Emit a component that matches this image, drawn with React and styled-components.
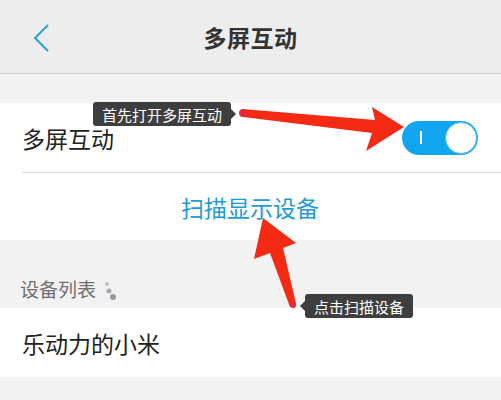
import React from 'react';
import styled, { createGlobalStyle } from 'styled-components';

const GlobalStyle = createGlobalStyle`
  body {
    margin: 0;
    background: #f2f2f2;
    font-family: "Noto Sans CJK SC", "Noto Sans", sans-serif;
  }
`;

const Page = styled.div`
  position: relative;
  width: 501px;
  height: 400px;
  overflow: hidden;
  background: #f2f2f2;
`;

const Header = styled.div`
  height: 73px;
  display: grid;
  grid-template-columns: 1fr auto 1fr;
  align-items: center;
  background: #ededed;
  border-bottom: 1px solid #c9c9c9;
`;

const Back = styled.div`
  padding-left: 32px;
  padding-top: 2px;
  display: flex;
`;

const Title = styled.div`
  font-size: 23px;
  font-weight: 700;
  color: #333;
  letter-spacing: 0.5px;
`;

const Gap = styled.div`
  height: ${p => p.h}px;
`;

const Section = styled.div`
  background: #fff;
`;

const Row = styled.div`
  height: ${p => p.h}px;
  display: flex;
  align-items: center;
  justify-content: ${p => (p.center ? 'center' : 'space-between')};
  padding: 0 23px 0 22px;
  font-size: 23px;
  color: ${p => (p.blue ? '#1f9bd6' : '#222')};
`;

const Divider = styled.div`
  height: 1px;
  margin-left: 22px;
  background: #dcdcdc;
`;

const Toggle = styled.div`
  width: 76px;
  height: 34px;
  border-radius: 17px;
  background: #11a4ef;
  display: flex;
  align-items: center;
  justify-content: space-between;
  padding: 0 1px 0 18px;
  box-sizing: border-box;
`;

const Mark = styled.div`
  width: 2px;
  height: 13px;
  background: #fff;
`;

const Knob = styled.div`
  width: 30px;
  height: 30px;
  border-radius: 50%;
  background: #fff;
  border: 1px solid #5bbde8;
`;

const ListLabel = styled.div`
  height: 68px;
  display: flex;
  align-items: flex-end;
  padding: 0 0 6px 20px;
  box-sizing: border-box;
  font-size: 19px;
  color: #6f6f6f;
  gap: 8px;
`;

const Tip = styled.div`
  position: absolute;
  left: ${p => p.x}px;
  top: ${p => p.y}px;
  height: 24px;
  padding: 0 9px;
  display: flex;
  align-items: center;
  background: #3e3e3e;
  border-radius: 3px;
  color: #fff;
  font-size: 15px;
  &::after {
    content: '';
    position: absolute;
    top: 7px;
    ${p => (p.side === 'right' ? 'right: -5px;' : 'left: -5px;')}
    border-top: 5px solid transparent;
    border-bottom: 5px solid transparent;
    ${p => (p.side === 'right' ? 'border-left: 5px solid #3e3e3e;' : 'border-right: 5px solid #3e3e3e;')}
  }
`;

const Arrows = styled.svg`
  position: absolute;
  left: 0;
  top: 0;
  pointer-events: none;
`;

const App = () => (
  <Page>
    <GlobalStyle />
    <Header>
      <Back>
        <svg width="20" height="30" viewBox="0 0 20 30">
          <path d="M16 2 L3 15 L16 28" fill="none" stroke="#2a9fd8" strokeWidth="2" />
        </svg>
      </Back>
      <Title>多屏互动</Title>
      <div />
    </Header>
    <Gap h={29} />
    <Section>
      <Row h={69}>
        <span>多屏互动</span>
        <Toggle>
          <Mark />
          <Knob />
        </Toggle>
      </Row>
      <Divider />
      <Row h={67} center blue>扫描显示设备</Row>
    </Section>
    <ListLabel>
      <span>设备列表</span>
      <svg width="12" height="22" viewBox="0 0 12 22">
        <circle cx="3" cy="4" r="2" fill="#bdbdbd" />
        <circle cx="5" cy="11" r="2.5" fill="#a8a8a8" />
        <circle cx="9" cy="17" r="3" fill="#999" />
      </svg>
    </ListLabel>
    <Section>
      <Row h={69}>乐动力的小米</Row>
    </Section>

    <Tip x={93} y={102} side="right">首先打开多屏互动</Tip>
    <Tip x={305} y={294}>点击扫描设备</Tip>

    <Arrows width="501" height="400">
      <polygon
        points="242,109 375,120 372,107 404,127 366,151 372,133 243,117"
        fill="#f42a14"
      />
      <circle cx="243" cy="113" r="4" fill="#e8283c" />
      <polygon
        points="263,218 296,243 283,248 296,304 290,307 270,253 254,259"
        fill="#f42a14"
      />
      <circle cx="293" cy="305" r="3" fill="#e8283c" />
    </Arrows>
  </Page>
);

export default App;
